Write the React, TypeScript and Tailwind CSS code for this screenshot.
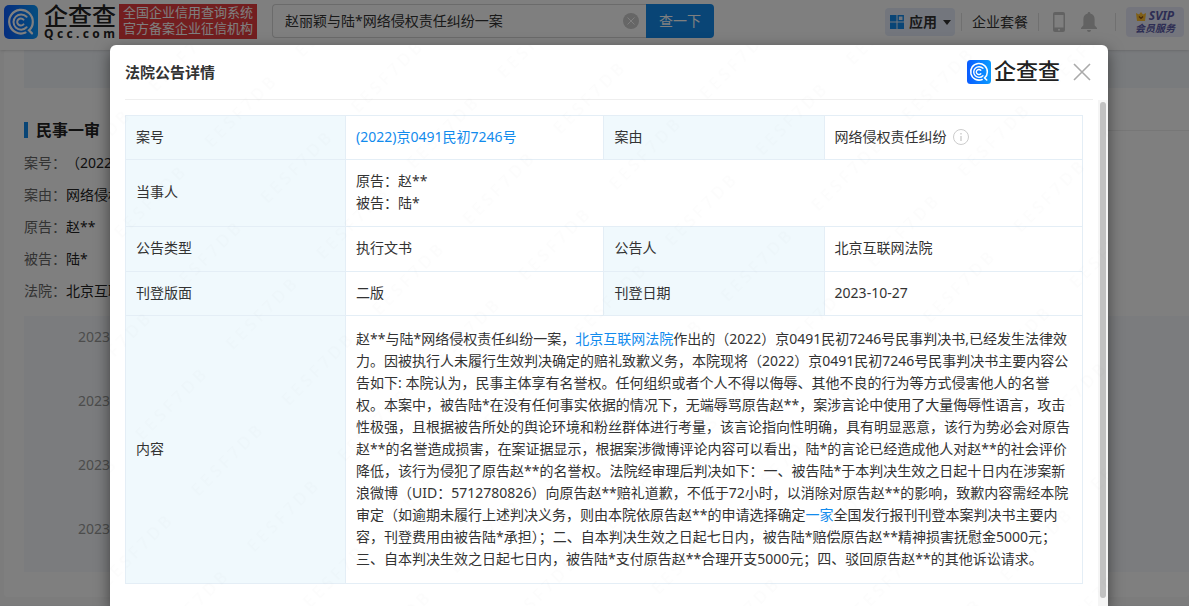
import type { ReactNode } from 'react'

const CASE_INFO = [
  { label: '案号', value: '（2022）京0491民初7246号' },
  { label: '案由', value: '网络侵权责任纠纷' },
  { label: '原告', value: '赵**' },
  { label: '被告', value: '陆*' },
  { label: '法院', value: '北京互联网法院' },
]

const TIMELINE = ['2023-10-27', '2023-09-18', '2023-07-05', '2023-03-22']

function LogoMark({ className }: { className: string }) {
  return (
    <svg viewBox="0 0 34 34" className={className} aria-hidden="true">
      <defs>
        <linearGradient id="mark" x1="0" y1="0" x2="1" y2="0">
          <stop offset="0" stopColor="#0a5cff" />
          <stop offset="1" stopColor="#0a9bff" />
        </linearGradient>
      </defs>
      <rect width="34" height="34" rx="5" fill="url(#mark)" />
      <g fill="none" stroke="#fff" strokeLinecap="round">
        <path d="M21.5 27.6A11.8 11.8 0 1 1 28.8 17C28.8 20.4 27.4 23.4 25 25.4L28 28.4" strokeWidth="2.2" />
        <path d="M22.6 22.3A7.6 7.6 0 1 1 22.6 11.8" strokeWidth="2" />
        <path d="M19.5 19.4A3.6 3.6 0 1 1 19.5 14.6" strokeWidth="2" />
      </g>
    </svg>
  )
}

// 企查查 lettering, kept as live text
function Brand({ className }: { className: string }) {
  return <span className={'font-medium text-[#222] whitespace-nowrap ' + className}>企查查</span>
}

function Header() {
  return (
    <header className="relative flex h-[50px] items-start bg-white pl-1 shadow-sm">
      <a href="#" className="flex items-start pt-1">
        <LogoMark className="mt-[1px] size-[34px]" />
        <span className="ml-[6px] flex w-[71px] flex-col">
          <Brand className="text-2xl leading-6" />
          <span className="flex justify-between text-xs leading-3 font-bold text-[#222]">
            {[...'Qcc.com'].map((c, i) => <span key={i}>{c}</span>)}
          </span>
        </span>
      </a>
      <div className="mt-1 ml-1 h-[35px] w-[138px] bg-[#e63c3f] text-center text-[13px] leading-4 whitespace-nowrap text-white">
        全国企业信用查询系统
        <br />
        官方备案企业征信机构
      </div>
      <form className="mt-1 ml-[15px] flex h-[34px] w-[442px]">
        <div className="flex min-w-0 flex-1 items-center rounded-l border border-r-0 border-[#d6d6d6] pr-[7px] pl-3">
          <input
            aria-label="搜索"
            defaultValue="赵丽颖与陆*网络侵权责任纠纷一案"
            className="min-w-0 flex-1 text-sm text-[#333] outline-none"
          />
          <button type="button" aria-label="清除" className="size-4">
            <svg viewBox="0 0 16 16">
              <circle cx="8" cy="8" r="8" fill="#ccc" />
              <path d="M4.5 4.5l7 7M11.5 4.5l-7 7" stroke="#fff" />
            </svg>
          </button>
        </div>
        <button type="button" className="w-[68px] rounded-r-sm bg-[#128bed] text-sm text-white">查一下</button>
      </form>
      <nav className="mt-[7px] mr-[5px] ml-auto flex h-[30px] items-center text-sm text-[#333]">
        <button className="flex h-7 w-[70px] items-center rounded bg-[#e6edfb] pl-[5px] font-bold">
          <svg viewBox="0 0 14 14" className="mr-[5px] size-[14px]" fill="#128bed">
            <path d="M0 0h6.5v6.5H0zM0 7.5h6.5V14H0zM7.5 7.5H14V14H7.5z" />
            <path d="M8.2.7h5v5h-5z" fill="none" stroke="#128bed" strokeWidth="1.4" />
          </svg>
          应用
          <svg viewBox="0 0 8 5" className="ml-[6px] h-[5px] w-2"><path d="M0 0h8L4 5z" fill="#333" /></svg>
        </button>
        <span className="mx-[6px] h-[18px] w-px bg-[#e0e0e0]" />
        <a href="#" className="mx-1">企业套餐</a>
        <span className="mx-[6px] h-[18px] w-px bg-[#e0e0e0]" />
        <svg viewBox="0 0 12 20" className="ml-2 h-5 w-3">
          <rect width="12" height="20" rx="2" fill="#c4c4c4" />
          <path d="M1.5 3h9v12.5h-9z" fill="#fff" />
          <circle cx="6" cy="17.7" r="1" fill="#fff" />
        </svg>
        <svg viewBox="0 0 16 20" className="ml-4 h-5 w-4" fill="#c4c4c4">
          <path d="M8 0a1.3 1.3 0 0 1 1.3 1.4A5.8 5.8 0 0 1 13.6 7v6.3L16 16v1H0v-1l2.4-2.7V7a5.8 5.8 0 0 1 4.3-5.6A1.3 1.3 0 0 1 8 0zM6 18h4a2 2 0 0 1-4 0z" />
        </svg>
        <span className="mr-[10px] ml-[18px] h-[18px] w-px bg-[#e0e0e0]" />
        <a href="#" className="flex h-[30px] w-[58px] flex-col items-center justify-center rounded-sm bg-[#e9ebfa] font-bold text-[#5a5aa8] italic">
          <span className="flex items-center gap-[3px] text-xs leading-3">
            <svg viewBox="0 0 10 9" className="h-[9px] w-[10px]">
              <path d="M0 1l3 1.5L5 0l2 2.5L10 1 9 9H1z" fill="#ffbe2e" />
              <path d="M3 4.5l2 2 2-2" fill="none" stroke="#8a4b10" strokeWidth="1.2" />
            </svg>
            SVIP
          </span>
          <span className="text-[10px] leading-3">会员服务</span>
        </a>
      </nav>
    </header>
  )
}

function CasePage() {
  return (
    <main className="bg-[#f8f8f8] pb-2 pl-1">
      <div className="rounded bg-white pb-[25px] pl-5">
        <div className="h-[38px] bg-[#f3f6fb]" />
        <h2 className="mt-[30px] flex h-6 items-center text-base leading-6 font-bold text-[#222]">
          <span className="mr-2 h-4 w-1 bg-[#128bed]" />
          民事一审
          <span className="ml-4 h-px flex-1 bg-[#eee]" />
        </h2>
        <dl className="mt-[5px] text-sm leading-8">
          {CASE_INFO.map((r) => (
            <div key={r.label} className="flex">
              <dt className="w-[42px] text-[#666]">{r.label}：</dt>
              <dd className="text-[#222]">{r.value}</dd>
            </div>
          ))}
        </dl>
        <ul className="mt-[9px] bg-[#f7f9fc] pl-[54px] text-sm leading-[42px] text-[#999]">
          {TIMELINE.map((d) => <li key={d} className="h-16">{d}</li>)}
        </ul>
      </div>
    </main>
  )
}

function Label({ children }: { children: ReactNode }) {
  return <th className="border border-[#e4eef6] bg-[#f0f9fd] px-[10px] pb-[2px] text-left font-normal">{children}</th>
}

function Value({ children, span }: { children: ReactNode; span?: number }) {
  return <td colSpan={span} className="border border-[#e4eef6] px-[10px] pb-[2px]">{children}</td>
}

function Link({ children }: { children: ReactNode }) {
  return <a href="#" className="text-[#128bed]">{children}</a>
}

function NoticeTable() {
  return (
    <table className="w-full table-fixed border-collapse text-sm leading-[22px] text-[#333]">
      <colgroup>
        <col className="w-[23%]" />
        <col className="w-[27%]" />
        <col className="w-[23%]" />
        <col className="w-[27%]" />
      </colgroup>
      <tbody>
        <tr className="h-11">
          <Label>案号</Label>
          <Value><Link>(2022)京0491民初7246号</Link></Value>
          <Label>案由</Label>
          <Value>
            <span className="flex items-center gap-[6px]">
              网络侵权责任纠纷
              <svg viewBox="0 0 16 16" className="size-4" fill="none" stroke="#ccc">
                <circle cx="8" cy="8" r="7.5" />
                <path d="M8 7v5M8 4v1.5" strokeWidth="1.4" />
              </svg>
            </span>
          </Value>
        </tr>
        <tr className="h-[67px]">
          <Label>当事人</Label>
          <Value span={3}>原告：赵**<br />被告：陆*</Value>
        </tr>
        <tr className="h-[45px]">
          <Label>公告类型</Label>
          <Value>执行文书</Value>
          <Label>公告人</Label>
          <Value>北京互联网法院</Value>
        </tr>
        <tr className="h-11">
          <Label>刊登版面</Label>
          <Value>二版</Value>
          <Label>刊登日期</Label>
          <Value>2023-10-27</Value>
        </tr>
        <tr className="h-[268px]">
          <Label>内容</Label>
          <Value span={3}>
            赵**与陆*网络侵权责任纠纷一案，<Link>北京互联网法院</Link>作出的（2022）京0491民初7246号民事判决书,已经发生法律效力。因被执行人未履行生效判决确定的赔礼致歉义务，本院现将（2022）京0491民初7246号民事判决书主要内容公告如下: 本院认为，民事主体享有名誉权。任何组织或者个人不得以侮辱、其他不良的行为等方式侵害他人的名誉权。本案中，被告陆*在没有任何事实依据的情况下，无端辱骂原告赵**，案涉言论中使用了大量侮辱性语言，攻击性极强，且根据被告所处的舆论环境和粉丝群体进行考量，该言论指向性明确，具有明显恶意，该行为势必会对原告赵**的名誉造成损害，在案证据显示，根据案涉微博评论内容可以看出，陆*的言论已经造成他人对赵**的社会评价降低，该行为侵犯了原告赵**的名誉权。法院经审理后判决如下：一、被告陆*于本判决生效之日起十日内在涉案新浪微博（UID：5712780826）向原告赵**赔礼道歉，不低于72小时，以消除对原告赵**的影响，致歉内容需经本院审定（如逾期未履行上述判决义务，则由本院依原告赵**的申请选择确定<Link>一家</Link>全国发行报刊刊登本案判决书主要内容，刊登费用由被告陆*承担）；二、自本判决生效之日起七日内，被告陆*赔偿原告赵**精神损害抚慰金5000元；三、自本判决生效之日起七日内，被告陆*支付原告赵**合理开支5000元；四、驳回原告赵**的其他诉讼请求。
          </Value>
        </tr>
      </tbody>
    </table>
  )
}

function Watermark() {
  return (
    <svg className="pointer-events-none absolute inset-0 size-full" aria-hidden="true">
      <pattern
        id="watermark"
        width="128"
        height="79"
        patternUnits="userSpaceOnUse"
        patternTransform="translate(290 113) rotate(-45)"
      >
        <text x="2" y="18" fontSize="16" fill="#000" fillOpacity="0.012">E E S F 7 D B</text>
      </pattern>
      <rect width="100%" height="100%" fill="url(#watermark)" />
    </svg>
  )
}

function NoticeDialog() {
  return (
    <section
      role="dialog"
      aria-label="法院公告详情"
      className="relative mt-[45px] mr-[81px] ml-[110px] flex flex-1 flex-col rounded-t-md bg-white shadow-[0_5px_15px_rgba(0,0,0,0.5)]"
    >
      <div className="mr-[15px] ml-[15px] flex h-[55px] items-center border-b border-[#eee]">
        <h1 className="text-[15px] font-bold text-[#333]">法院公告详情</h1>
        <LogoMark className="ml-auto size-6" />
        <Brand className="ml-[3px] pb-1 text-[22px] leading-6" />
        <button aria-label="关闭" className="mr-[2px] ml-[13px] size-[18px]">
          <svg viewBox="0 0 18 18" stroke="#aaa" strokeWidth="1.6"><path d="M1 1l16 16M17 1L1 17" /></svg>
        </button>
      </div>
      <div className="flex flex-1">
        <div className="min-w-0 flex-1 pt-[15px] pr-[15px] pl-[15px]">
          <NoticeTable />
        </div>
        <div className="flex w-[10px] bg-[#f5f5f5] pt-[2px] pr-[2px] pb-2 pl-[2px]">
          <div className="flex-1 rounded-full bg-[#c1c1c1]" />
        </div>
      </div>
      <Watermark />
    </section>
  )
}

export default function App() {
  return (
    <div className="relative h-screen overflow-hidden bg-[#f3f4f6] font-['Noto_Sans','Noto_Sans_CJK_SC',sans-serif]">
      <Header />
      <CasePage />
      <div className="absolute inset-0 flex flex-col bg-black/50">
        <NoticeDialog />
      </div>
    </div>
  )
}
